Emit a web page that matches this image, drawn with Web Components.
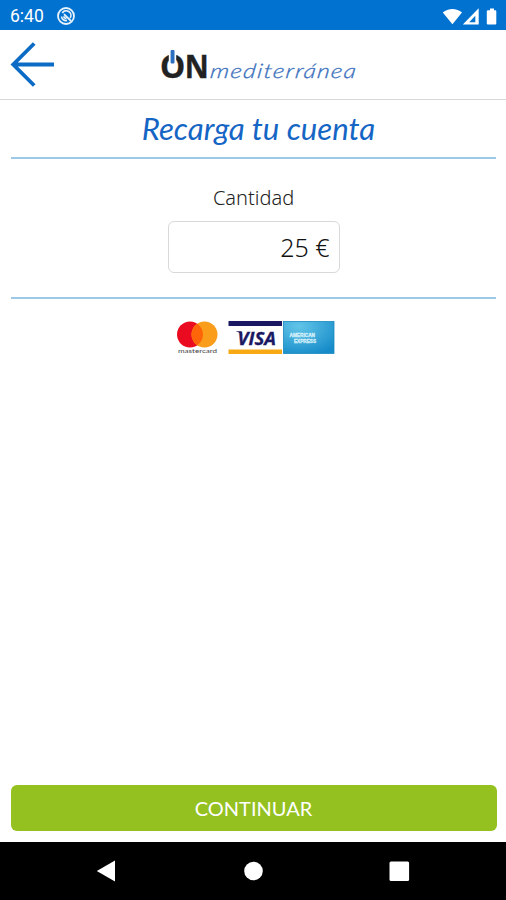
<!DOCTYPE html>
<html lang="es">
<head>
<meta charset="utf-8">
<title>Recarga tu cuenta</title>
<style>
  html, body { margin: 0; height: 100%; background: #fff; }
</style>
</head>
<body>
<recharge-app></recharge-app>

<script>
class StatusBar extends HTMLElement {
  constructor() {
    super();
    this.attachShadow({ mode: "open" });
    this.shadowRoot.innerHTML = `
      <style>
        :host {
          display: flex;
          align-items: center;
          box-sizing: border-box;
          height: 30px;
          padding: 1px 8px 0 10px;
          background: #0272d0;
          color: #fff;
          font: 17.5px/20px Roboto, sans-serif;
        }
        svg { display: block; }
        .sync { margin-left: 12px; }
        .right { margin-left: auto; }
      </style>
      <slot></slot>
      <svg class="sync" width="20" height="20" viewBox="0 0 20 20" fill="none" stroke="#e8f3fc">
        <circle cx="10" cy="10" r="8" stroke-width="1.8"/>
        <path d="M6.300 7A4.600 4.600 0 0 1 14.200 12M5.500 10.500A4.500 4.500 0 0 0 11 14.400" stroke-width="1.700"/>
        <path d="M8 8.200L15 15M7.800 10.300a2.300 2.300 0 0 0 2.600 2" stroke-width="1.800"/>
      </svg>
      <svg class="right" width="56" height="20" viewBox="0 0 56 20" fill="#fff">
        <path d="M.8 6.500C6 1.800 14.800 1.800 20 6.500L10.400 18.200Z"/>
        <path d="M36.700 2.300V18.500H20.800Z"/>
        <path d="M33.300 9.800V16.300H27.200Z" fill="#0272d0"/>
        <path d="M46 4.200h2V2.500h4v1.700h1.300q1 0 1 1V17.500q0 1-1 1h-7.500q-1 0-1-1V5.200q0-1 1.200-1Z"/>
      </svg>
    `;
  }
}
customElements.define("status-bar", StatusBar);

class BrandLogo extends HTMLElement {
  constructor() {
    super();
    this.attachShadow({ mode: "open" });
    this.shadowRoot.innerHTML = `
      <style>
        :host { display: block; }
        svg { display: block; }
      </style>
      <svg width="212" height="56" viewBox="154 38 212 56">
        <g font-family="'Open Sans', sans-serif" font-weight="700" font-size="32" fill="#222" stroke="#222" stroke-width=".4">
          <text x="160" y="78" textLength="25.200" lengthAdjust="spacingAndGlyphs">O</text>
          <text x="184.800" y="78" textLength="24" lengthAdjust="spacingAndGlyphs">N</text>
        </g>
        <rect x="168.800" y="49" width="7.400" height="12.500" fill="#fff"/>
        <rect x="170.600" y="50" width="3.900" height="13.500" rx="1" fill="#2c6fc0"/>
        <text transform="translate(209.500 77.500) skewX(-8)" textLength="147" lengthAdjust="spacingAndGlyphs"
          font-family="Lato, sans-serif" font-style="italic" font-weight="300" font-size="20" letter-spacing="1.200"
          fill="#3b70bd" stroke="#3b70bd" stroke-width=".3">mediterránea</text>
      </svg>
    `;
  }
}
customElements.define("brand-logo", BrandLogo);

class AppHeader extends HTMLElement {
  constructor() {
    super();
    this.attachShadow({ mode: "open" });
    this.shadowRoot.innerHTML = `
      <style>
        :host {
          display: grid;
          grid-template-columns: 144px 212px 1fr;
          align-items: start;
          box-sizing: border-box;
          height: 70px;
          padding: 8px 0 0 10px;
          border-bottom: 1px solid #d8d8d8;
        }
        svg { display: block; }
        .back { margin-top: 2px; }
      </style>
      <svg class="back" width="46" height="48" viewBox="10 40 46 48" fill="none" stroke="#0b6bc5" stroke-width="3.800">
        <path d="M34.200 43.500L13.200 64.500L34.200 85.500M13.200 64.500H54"/>
      </svg>
      <brand-logo></brand-logo>
    `;
  }
}
customElements.define("app-header", AppHeader);

class PageTitle extends HTMLElement {
  constructor() {
    super();
    this.attachShadow({ mode: "open" });
    this.shadowRoot.innerHTML = `
      <style>
        :host {
          display: block;
          height: 57px;
          margin: 0 10px 0 11px;
          padding-left: 10px;
          border-bottom: 2px solid #9cc9e6;
          color: #1565c5;
          font: italic 400 31.2px/56px Lato, sans-serif;
          text-align: center;
        }
      </style>
      <slot></slot>
    `;
  }
}
customElements.define("page-title", PageTitle);

class AmountField extends HTMLElement {
  constructor() {
    super();
    this.attachShadow({ mode: "open" });
    this.shadowRoot.innerHTML = `
      <style>
        :host {
          display: flex;
          flex-direction: column;
          align-items: center;
          box-sizing: border-box;
          height: 140px;
          margin: 0 10px 0 11px;
          padding-top: 25px;
          border-bottom: 2px solid #9cc9e6;
          color: #222;
          font-family: "Noto Sans", sans-serif;
        }
        .label { font-size: 20px; font-weight: 300; line-height: 28px; }
        .box {
          box-sizing: border-box;
          width: 172px;
          height: 52px;
          margin-top: 9px;
          padding-right: 9px;
          border: 1px solid #d9d9d9;
          border-radius: 6px;
          color: #111;
          font-size: 25px;
          font-weight: 300;
          line-height: 51px;
          text-align: right;
        }
      </style>
      <div class="label"><slot name="label"></slot></div>
      <div class="box"><slot></slot></div>
    `;
  }
}
customElements.define("amount-field", AmountField);

class PaymentCards extends HTMLElement {
  constructor() {
    super();
    this.attachShadow({ mode: "open" });
    this.shadowRoot.innerHTML = `
      <style>
        :host {
          display: flex;
          justify-content: center;
          padding: 20px 0 0 4px;
        }
        svg { display: block; }
      </style>
      <svg width="162" height="38" viewBox="174 319 162 38">
        <defs>
          <radialGradient id="amex" cx=".3" cy=".15" r=".95">
            <stop offset="0" stop-color="#62c5e8"/>
            <stop offset="1" stop-color="#168bc9"/>
          </radialGradient>
        </defs>
        <circle cx="190" cy="334.500" r="13" fill="#ea0b20"/>
        <circle cx="204.500" cy="334.500" r="13" fill="#f99d1b"/>
        <path d="M197.250 323.700a13 13 0 0 1 0 21.600a13 13 0 0 1 0-21.600Z" fill="#ff6508"/>
        <text x="178" y="353" font-family="Lato, sans-serif" font-size="6.500" fill="#444"
          textLength="39" lengthAdjust="spacingAndGlyphs">mastercard</text>
        <rect x="228.500" y="321" width="53.500" height="5" fill="#1b1863"/>
        <rect x="228.500" y="349.500" width="53.500" height="4.500" fill="#f7a914"/>
        <text x="237.500" y="344.800" font-family="'Open Sans', sans-serif" font-style="italic" font-weight="700"
          font-size="18.500" fill="#1b1863" stroke="#1b1863" stroke-width=".3"
          textLength="38.500" lengthAdjust="spacingAndGlyphs">VISA</text>
        <path d="M235.500 331.300h6l1 4.500q-2-3.200-7-4.500Z" fill="#1b1863"/>
        <rect x="283.500" y="321.500" width="50.500" height="32" fill="url(#amex)" stroke="#1889bf" stroke-width=".8"/>
        <g font-family="'Liberation Sans', sans-serif" font-weight="700" font-size="5" fill="#d8f1fb" stroke="#d8f1fb" stroke-width=".3">
          <text x="289.500" y="337" textLength="25.500" lengthAdjust="spacingAndGlyphs">AMERICAN</text>
          <text x="294" y="343" textLength="22" lengthAdjust="spacingAndGlyphs">EXPRESS</text>
        </g>
      </svg>
    `;
  }
}
customElements.define("payment-cards", PaymentCards);

class ContinueButton extends HTMLElement {
  constructor() {
    super();
    this.attachShadow({ mode: "open" });
    this.shadowRoot.innerHTML = `
      <style>
        :host { display: block; margin: auto 9.5px 11px 10.5px; }
        button {
          display: block;
          width: 100%;
          height: 46px;
          padding: 0;
          border: 0;
          border-radius: 6px;
          background: #94c11f;
          color: #fff;
          font: 400 20px/46px Lato, sans-serif;
        }
      </style>
      <button><slot></slot></button>
    `;
  }
}
customElements.define("continue-button", ContinueButton);

class NavBar extends HTMLElement {
  constructor() {
    super();
    this.attachShadow({ mode: "open" });
    this.shadowRoot.innerHTML = `
      <style>
        :host {
          display: flex;
          align-items: center;
          justify-content: space-between;
          box-sizing: border-box;
          height: 58px;
          padding: 0 96px;
          background: #000;
        }
        svg { display: block; }
      </style>
      <svg width="22" height="22" viewBox="0 0 22 22" fill="#fff"><path d="M.8 11L19 .5V21.500Z"/></svg>
      <svg width="20" height="20" viewBox="0 0 20 20" fill="#fff"><circle cx="10.500" cy="10" r="9.300"/></svg>
      <svg width="22" height="20" viewBox="0 0 22 20" fill="#fff"><rect x="1.500" y=".4" width="19.600" height="19.600" rx="1.500"/></svg>
    `;
  }
}
customElements.define("nav-bar", NavBar);

class RechargeApp extends HTMLElement {
  constructor() {
    super();
    this.attachShadow({ mode: "open" });
    this.shadowRoot.innerHTML = `
      <style>
        :host {
          display: flex;
          flex-direction: column;
          height: 100vh;
          background: #fff;
        }
      </style>
      <status-bar>6:40</status-bar>
      <app-header></app-header>
      <page-title>Recarga tu cuenta</page-title>
      <amount-field>
        <span slot="label">Cantidad</span>
        25 €
      </amount-field>
      <payment-cards></payment-cards>
      <continue-button>CONTINUAR</continue-button>
      <nav-bar></nav-bar>
    `;
  }
}
customElements.define("recharge-app", RechargeApp);
</script>
</body>
</html>
